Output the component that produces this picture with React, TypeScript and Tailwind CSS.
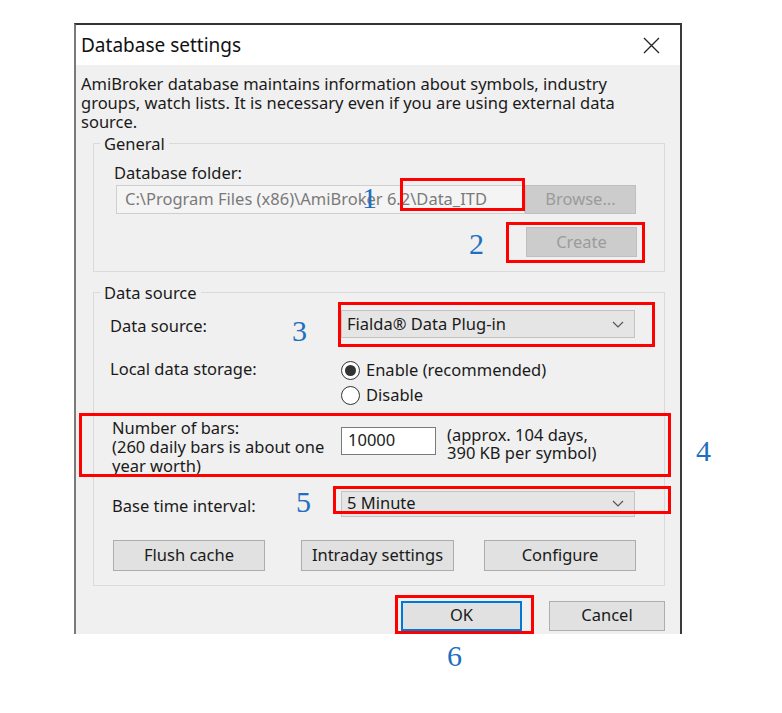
import React from "react";

const font = { fontFamily: '"Noto Sans", "Liberation Sans", sans-serif' };

function WinButton({
  label,
  className = "",
  disabled = false,
  focused = false,
}: {
  label: string;
  className?: string;
  disabled?: boolean;
  focused?: boolean;
}) {
  const base = disabled
    ? "bg-[#cccccc] border-[#bfbfbf] text-[#9b9b9b]"
    : focused
      ? "bg-[#e1e1e1] border-[#0078d7] border-2 text-[#1a1a1a]"
      : "bg-[#e1e1e1] border-[#adadad] text-[#1a1a1a]";
  return (
    <div
      className={`flex items-center justify-center border text-[16.5px] leading-none ${base} ${className}`}
    >
      {label}
    </div>
  );
}

function Combo({ value, className = "" }: { value: string; className?: string }) {
  return (
    <div
      className={`flex items-center justify-between border border-[#c4c4c4] bg-[#e5e5e5] pl-[5px] pr-[10px] text-[16.5px] text-[#1a1a1a] ${className}`}
    >
      <span>{value}</span>
      <svg width="12" height="7" viewBox="0 0 12 7" fill="none">
        <path d="M1 1l5 5 5-5" stroke="#555" strokeWidth="1.2" />
      </svg>
    </div>
  );
}

function Radio({ checked, label }: { checked?: boolean; label: string }) {
  return (
    <div className="flex h-[25px] items-center">
      <div className="flex h-[19px] w-[19px] items-center justify-center rounded-full border-[1.5px] border-[#333] bg-white">
        {checked && <div className="h-[11px] w-[11px] rounded-full bg-[#333]" />}
      </div>
      <span className="ml-[6px] text-[16.5px] text-[#1a1a1a]">{label}</span>
    </div>
  );
}

function Mark({ className }: { className: string }) {
  return <div className={`absolute border-[3px] border-[#ff0000] ${className}`} />;
}

function Num({ n, className }: { n: string; className: string }) {
  return (
    <div
      className={`absolute text-[30px] leading-none text-[#1e6fc1] ${className}`}
      style={{ fontFamily: '"Liberation Serif", "DejaVu Serif", serif' }}
    >
      {n}
    </div>
  );
}

export default function App() {
  return (
    <div className="relative h-[713px] w-[782px] overflow-hidden bg-white" style={font}>
      <div className="ml-[74px] mt-[23px] flex h-[611px] w-[608px] flex-col border-x-2 border-t-2 border-l-[#7a7a7a] border-r-[#3a3a3a] border-t-[#333333]">
        {/* title bar */}
        <div className="flex h-[40px] items-center justify-between bg-white pl-[5px] pr-[20px]">
          <span className="text-[19px] text-[#111]">Database settings</span>
          <svg width="17" height="17" viewBox="0 0 17 17">
            <path d="M1 1l15 15M16 1L1 16" stroke="#222" strokeWidth="1.3" />
          </svg>
        </div>

        {/* body */}
        <div className="flex flex-1 flex-col bg-[#f0f0f0] pl-[5px] pr-[15px] pt-[9px] text-[#1a1a1a]">
          <p className="text-[16.5px] leading-[19px]">
            AmiBroker database maintains information about symbols, industry
            <br />
            groups, watch lists. It is necessary even if you are using external data
            <br />
            source.
          </p>

          <fieldset className="ml-[12px] mt-[3px] border border-[#dadada]">
            <legend className="ml-[6px] px-[4px] text-[16.5px] leading-[19px]">General</legend>
            <div className="pb-[14px] pl-[20px] pr-[27px]">
              <div className="mt-[10px] text-[16.5px] leading-[19px]">Database folder:</div>
              <div className="ml-[2px] mt-[3px] flex h-[29px]">
                <div className="flex w-[409px] items-center border border-[#cfcfcf] bg-[#f4f4f4] pl-[8px] text-[16.5px] text-[#7a7a7a]">
                  C:\Program Files (x86)\AmiBroker 6.2\Data_ITD
                </div>
                <WinButton label="Browse..." disabled className="w-[111px]" />
              </div>
              <div className="mt-[13px] flex justify-end">
                <WinButton label="Create" disabled className="h-[30px] w-[111px]" />
              </div>
            </div>
          </fieldset>

          <fieldset className="ml-[12px] mt-[11px] border border-[#dadada]">
            <legend className="ml-[6px] px-[4px] text-[16.5px] leading-[19px]">Data source</legend>
            <div className="pb-[14px] pl-[16px] pr-[28px]">
              <div className="mt-[8px] flex items-center">
                <div className="w-[231px] pt-[4px] text-[16.5px]">Data source:</div>
                <Combo value="Fialda® Data Plug-in" className="h-[28px] w-[294px]" />
              </div>
              <div className="mt-[20px] flex">
                <div className="w-[231px] text-[16.5px] leading-[19px]">Local data storage:</div>
                <div className="-mt-[1px] flex flex-col">
                  <Radio checked label="Enable (recommended)" />
                  <Radio label="Disable" />
                </div>
              </div>
              <div className="mt-[10px] flex pl-[2px]">
                <div className="w-[229px] text-[16.5px] leading-[19px]">
                  Number of bars:
                  <br />
                  (260 daily bars is about one
                  <br />
                  year worth)
                </div>
                <div className="mt-[9px] flex h-[28px] w-[95px] items-center border border-[#7a7a7a] bg-white pl-[6px] text-[16.5px]">
                  10000
                </div>
                <div className="ml-[11px] mt-[8px] text-[16.5px] leading-[18px]">
                  (approx. 104 days,
                  <br />
                  390 KB per symbol)
                </div>
              </div>
              <div className="mt-[14px] flex items-center pl-[2px]">
                <div className="w-[229px] pt-[5px] text-[16.5px]">Base time interval:</div>
                <Combo value="5 Minute" className="h-[26px] w-[294px]" />
              </div>
              <div className="mt-[21px] flex pl-[3px]">
                <WinButton label="Flush cache" className="h-[31px] w-[152px]" />
                <WinButton label="Intraday settings" className="ml-[36px] h-[31px] w-[153px]" />
                <WinButton label="Configure" className="ml-[30px] h-[31px] w-[152px]" />
              </div>
            </div>
          </fieldset>

          <div className="mt-[15px] flex justify-end">
            <WinButton label="OK" focused className="h-[30px] w-[121px]" />
            <WinButton label="Cancel" className="ml-[27px] h-[30px] w-[116px]" />
          </div>
        </div>
      </div>

      {/* annotations */}
      <Mark className="left-[400px] top-[178px] h-[33px] w-[125px]" />
      <Mark className="left-[506px] top-[222px] h-[41px] w-[139px]" />
      <Mark className="left-[338px] top-[302px] h-[45px] w-[317px]" />
      <Mark className="left-[79px] top-[413px] h-[64px] w-[592px]" />
      <Mark className="left-[333px] top-[486px] h-[28px] w-[338px]" />
      <Mark className="left-[395px] top-[595px] h-[39px] w-[139px]" />

      <Num n="1" className="left-[362px] top-[183px]" />
      <Num n="2" className="left-[469px] top-[229px]" />
      <Num n="3" className="left-[292px] top-[316px]" />
      <Num n="4" className="left-[696px] top-[436px]" />
      <Num n="5" className="left-[296px] top-[487px]" />
      <Num n="6" className="left-[447px] top-[641px]" />
    </div>
  );
}
